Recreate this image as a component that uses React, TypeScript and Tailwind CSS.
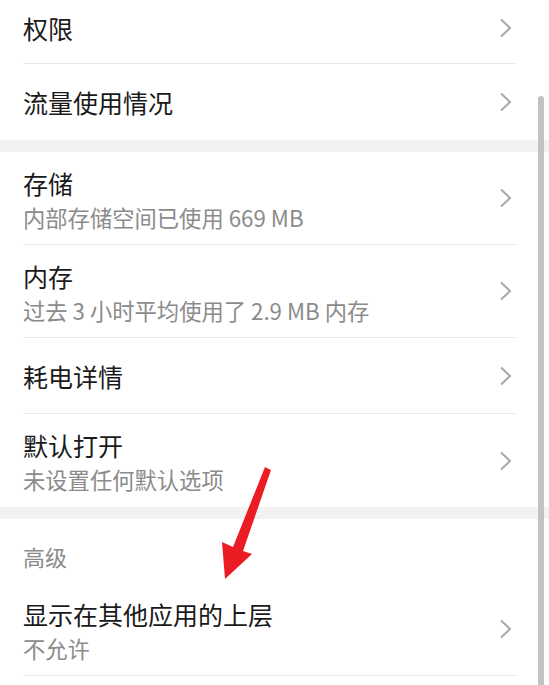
import React from 'react';

type Item = {
  title: string;
  subtitle?: string;
  last?: boolean;
};

const font = { fontFamily: '"Noto Sans CJK SC", "Noto Sans", sans-serif' };

function Chevron() {
  return (
    <svg width="13" height="20" viewBox="0 0 13 20" className="shrink-0">
      <path d="M2 1.5 L11 10 L2 18.5" fill="none" stroke="#a9a9a9" strokeWidth="2" />
    </svg>
  );
}

function Row({ title, subtitle, last }: Item) {
  return (
    <div
      className={`ml-[23px] mr-[33px] flex items-center justify-between ${
        subtitle ? 'h-[93px]' : 'h-[76px]'
      } ${last ? '' : 'border-b border-[#e9e9e9]'}`}
    >
      <div className={`flex flex-col ${subtitle ? 'pt-[3px]' : ''}`}>
        <span className="text-[25px] leading-[34px] text-[#1a1a1a]">{title}</span>
        {subtitle && (
          <span className="text-[22.3px] leading-[34px] text-[#8b8b8b]">{subtitle}</span>
        )}
      </div>
      <div className="pr-[4px]">
        <Chevron />
      </div>
    </div>
  );
}

function Band() {
  return <div className="h-[12px] bg-[#f2f2f2]" />;
}

export default function App() {
  return (
    <div className="relative h-[685px] w-[549px] overflow-hidden bg-white" style={font}>
      {/* top row is cut off by the screenshot */}
      <div className="ml-[23px] mr-[33px] flex h-[64px] items-center justify-between border-b border-[#e9e9e9] pb-[8px]">
        <span className="text-[25px] leading-[34px] text-[#1a1a1a]">权限</span>
        <div className="pr-[4px]">
          <Chevron />
        </div>
      </div>
      <Row title="流量使用情况" last />
      <Band />
      <Row title="存储" subtitle="内部存储空间已使用 669 MB" />
      <Row title="内存" subtitle="过去 3 小时平均使用了 2.9 MB 内存" />
      <Row title="耗电详情" />
      <Row title="默认打开" subtitle="未设置任何默认选项" last />
      <Band />
      <div className="flex h-[64px] items-center pl-[23px] pt-[10px]">
        <span className="text-[22px] leading-[30px] text-[#8b8b8b]">高级</span>
      </div>
      <Row title="显示在其他应用的上层" subtitle="不允许" />

      {/* scrollbar */}
      <div className="absolute left-[538px] top-[96px] h-[600px] w-[6px] rounded-t-full bg-[#c2c2c2]" />

      {/* red annotation arrow */}
      <svg className="pointer-events-none absolute left-0 top-0" width="549" height="685">
        <polygon
          points="265,467 271,470 243,551 252,554 225,579 222,542 233,547"
          fill="#ec1c24"
        />
      </svg>
    </div>
  );
}
